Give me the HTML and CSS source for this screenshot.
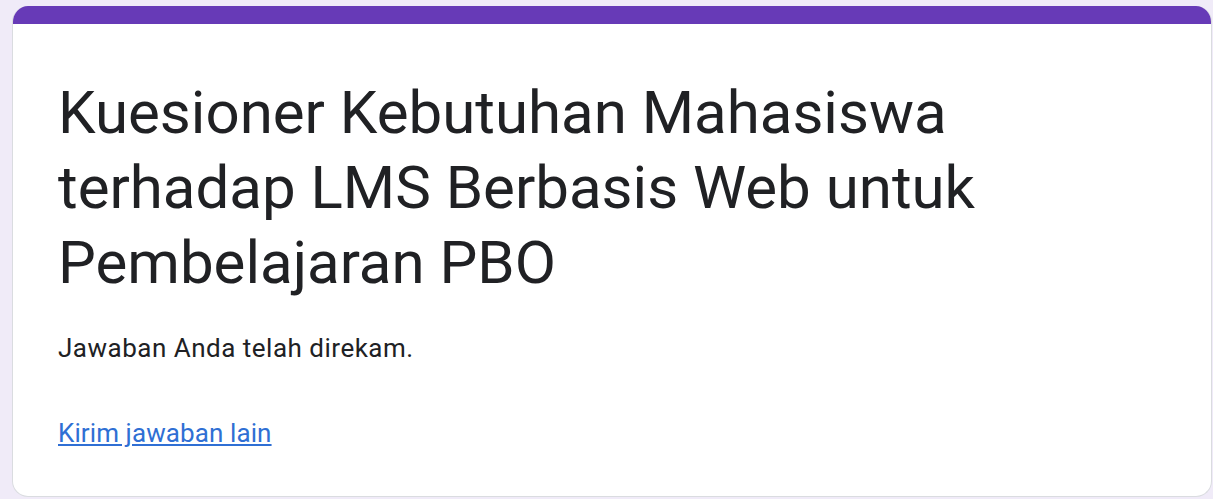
FILE: index.html
```html
<!DOCTYPE html>
<html lang="id">
<head>
  <meta charset="UTF-8">
  <title>Kuesioner Kebutuhan Mahasiswa terhadap LMS Berbasis Web untuk Pembelajaran PBO</title>
  <link rel="stylesheet" href="styles.css">
</head>
<body>
  <div class="card">
    <div class="card-top"></div>
    <div class="card-body">
      <h1 class="title">Kuesioner Kebutuhan Mahasiswa terhadap LMS Berbasis Web untuk Pembelajaran PBO</h1>
      <p class="message">Jawaban Anda telah direkam.</p>
      <a class="again" href="#">Kirim jawaban lain</a>
    </div>
  </div>
</body>
</html>
```

FILE: styles.css
```css
body {
  margin: 0;
  padding: 6px 1px 0 12px;
  background-color: #f0ebf8;
  font-family: Roboto, 'Noto Sans', Arial, sans-serif;
  color: #202124;
}

.card {
  background-color: #fff;
  border: 1px solid #dadce0;
  border-top: none;
  border-radius: 16px;
  overflow: hidden;
  height: 491px;
  box-sizing: border-box;
}

.card-top {
  height: 18px;
  background-color: #673ab7;
}

.card-body {
  padding: 51px 45px 0 45px;
}

.title {
  margin: 0;
  font-size: 60px;
  font-weight: 400;
  line-height: 75px;
  max-width: 960px;
}

.message {
  margin: 30px 0 0 0;
  font-size: 26px;
  line-height: 36px;
  letter-spacing: 0.5px;
}

.again {
  display: inline-block;
  margin-top: 49px;
  font-size: 26px;
  line-height: 36px;
  letter-spacing: 0.1px;
  color: #2f6fd4;
}
```
